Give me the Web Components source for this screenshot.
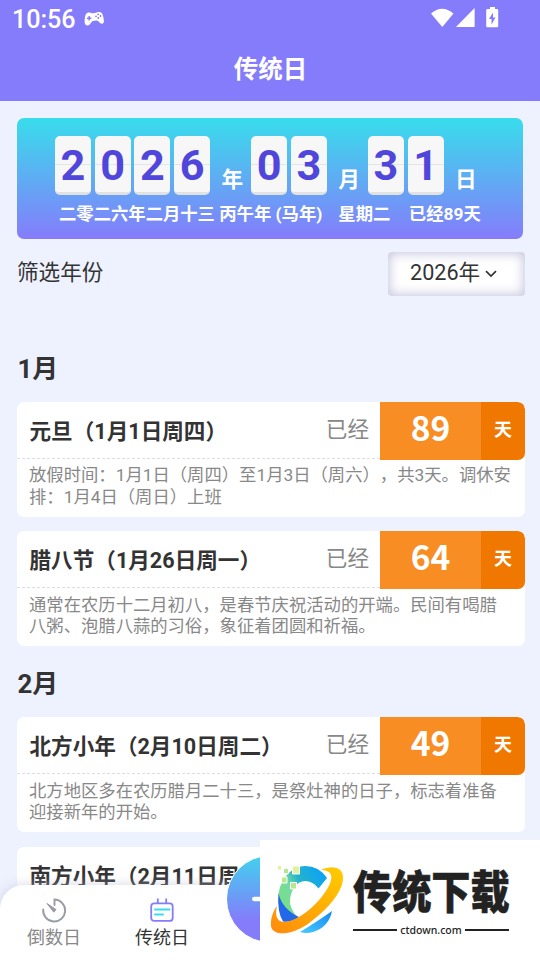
<!DOCTYPE html>
<html lang="zh-CN">
<head>
<meta charset="utf-8">
<title>传统日</title>
<style>
html,body{margin:0;padding:0}
body{width:540px;height:960px;overflow:hidden;background:#eef2ff;color:#333;font-family:Roboto,"Noto Sans CJK SC",sans-serif;text-spacing-trim:space-all}
</style>
</head>
<body>
<app-screen>
  <status-bar slot="top" time="10:56"></status-bar>
  <title-bar slot="top">传统日</title-bar>
  <date-panel year="2026" month="03" day="31">
    <span slot="lunar">二零二六年二月十三 丙午年 (马年)</span>
    <span slot="week">星期二</span>
    <span slot="passed">已经89天</span>
  </date-panel>
  <year-filter label="筛选年份">2026年</year-filter>
  <month-group name="1月">
    <day-card state="已经" days="89" unit="天"><span slot="name">元旦（1月1日周四）</span>放假时间：1月1日（周四）至1月3日（周六），共3天。调休安排：1月4日（周日）上班</day-card>
    <day-card state="已经" days="64" unit="天"><span slot="name">腊八节（1月26日周一）</span>通常在农历十二月初八，是春节庆祝活动的开端。民间有喝腊八粥、泡腊八蒜的习俗，象征着团圆和祈福。</day-card>
  </month-group>
  <month-group name="2月">
    <day-card state="已经" days="49" unit="天"><span slot="name">北方小年（2月10日周二）</span>北方地区多在农历腊月二十三，是祭灶神的日子，标志着准备迎接新年的开始。</day-card>
    <day-card><span slot="name">南方小年（2月11日周</span></day-card>
  </month-group>
  <tab-bar slot="overlay"></tab-bar>
  <site-mark slot="overlay"></site-mark>
</app-screen>
<script>
function define(name, html, setup){
  const t=document.createElement('template'); t.innerHTML=html;
  customElements.define(name, class extends HTMLElement{
    constructor(){super();this.attachShadow({mode:'open'}).append(t.content.cloneNode(true));}
    connectedCallback(){ if(setup) setup(this,this.shadowRoot); }
  });
}

define('app-screen',`<style>
:host{display:block;position:relative;width:540px;height:960px;overflow:hidden}
header{background:#857cfb;height:101px;display:flex;flex-direction:column}
main{padding:17px 15px 0 17px;display:flex;flex-direction:column}
</style><header><slot name="top"></slot></header><main><slot></slot></main><slot name="overlay"></slot>`);

define('status-bar',`<style>
:host{display:flex;height:38px;padding:0 41px 0 12px;align-items:center;color:#fff;box-sizing:border-box;justify-content:space-between}
.l{display:flex;align-items:center}
time{font-size:25.200px;line-height:38px;margin-top:2px;font-weight:500;letter-spacing:-.1px}
.pad{margin:0 0 0 9px}
.sys{margin-top:-3px}
</style>
<div class="l"><time></time>
<svg class="pad" width="21" height="16" viewBox="0 0 21 16"><path fill="#fff" d="M1 6C1.600 2.400 3 1.200 5.500 1.500C7 1.700 8 2.500 9.500 2.300C11.500 2.200 13 .6 15.500 1C18.300 1.400 19 4 19.600 7.500C20.200 10.500 20 12.600 18 12.800C15.800 13 14.600 9.500 12.500 9.600L9 10.100C7 10.300 6.700 14.500 3.500 14.500C.2 14.500 .3 10 1 6Z"/><path stroke="#857cfb" stroke-width="1.500" d="M3 7.200h4.400M5.200 5v4.400"/><g fill="#857cfb"><circle cx="14.200" cy="3.300" r=".9"/><circle cx="16.500" cy="5" r=".9"/><circle cx="12" cy="5.300" r=".9"/><circle cx="14.300" cy="7" r=".9"/></g></svg></div>
<svg class="sys" width="69" height="22" viewBox="0 0 69 22"><g fill="#fff"><path d="M1 6.500Q12 -3 23.500 6.500L12.300 20Z"/><path d="M44.600 1v19H26Z"/><path d="M60 0h5v2h2q1.200 0 1.200 1.200V19q0 1.200-1.200 1.200H57.400q-1.200 0-1.200-1.200V3.200Q56.200 2 57.400 2H60Z"/></g><path fill="#857cfb" d="M63 5.500 59 12h2.500v5.500l4-7H63Z"/></svg>`,
(h,r)=>r.querySelector('time').textContent=h.getAttribute('time'));

define('title-bar',`<style>
:host{display:flex;justify-content:center;height:63px;line-height:63px;color:#fff;font-size:24.480px;font-weight:700;padding-left:1px}
</style><slot></slot>`);

define('flip-digits',`<style>
:host{display:flex;gap:3.700px;margin-right:3.700px}
b{display:block;width:36px;height:59px;box-sizing:border-box;border-radius:5px;border-bottom:3px solid #e2e2e2;background:linear-gradient(#f7f7f7 28px,#e5e5e5 28px,#e5e5e5 29px,#f7f7f7 29px);color:#5046dc;font:700 43.200px/59px Roboto,sans-serif;text-align:center}
</style>`,(h,r)=>{for(const c of h.getAttribute('value')){const b=document.createElement('b');b.textContent=c;r.append(b);}});

define('date-panel',`<style>
:host{display:block;box-sizing:border-box;width:506px;height:121px;padding:18px 30px 0 38px;border-radius:7px;background:linear-gradient(#38ddec,#857cfb);color:#fff;font-weight:700}
.d{display:flex;height:59px}
i{font-style:normal;font-size:21.600px;line-height:30px;align-self:flex-end;margin:0 8px 0 7.800px;height:30px}
.t{display:flex;font-size:17.340px;line-height:24px;margin:7px 0 0 4px;white-space:nowrap}
.w{margin-left:16px}.p{margin-left:18.500px}
</style><div class="d"></div><div class="t"><slot name="lunar"></slot><div class="w"><slot name="week"></slot></div><div class="p"><slot name="passed"></slot></div></div>`,
(h,r)=>{const d=r.querySelector('.d');for(const [k,u] of [['year','年'],['month','月'],['day','日']]){const f=document.createElement('flip-digits');f.setAttribute('value',h.getAttribute(k));const i=document.createElement('i');i.textContent=u;d.append(f,i);}});

define('year-filter',`<style>
:host{display:flex;justify-content:space-between;height:44px;margin-top:13px;font-size:21.600px;line-height:41px}
.s{width:137px;box-sizing:border-box;padding-left:22px;display:flex;gap:5px;align-items:center;background:#fff;border-radius:4px;box-shadow:inset 0 0 11px 2px #c9c9e2}
.s div{margin-top:-3px}
.s svg{margin-top:0}
</style><span class="n"></span><div class="s"><div><slot></slot></div><svg width="12" height="8" viewBox="0 0 12 8"><path d="M1 1.200 6 6 11 1.200" fill="none" stroke="#333" stroke-width="1.700"/></svg></div>`,
(h,r)=>r.querySelector('.n').textContent=h.getAttribute('label'));

define('month-group',`<style>
:host{display:block}
:host(:first-of-type){margin-top:35px}
h2{margin:0;height:71px;font-size:25.920px;line-height:77px;font-weight:700;padding-left:.5px}
.c{display:flex;flex-direction:column;gap:14.400px}
</style><h2></h2><div class="c"><slot></slot></div>`,(h,r)=>r.querySelector('h2').textContent=h.getAttribute('name'));

define('day-card',`<style>
:host{display:block;height:115px;background:#fff;border-radius:7px;overflow:hidden}
.h{display:flex;height:57px;position:relative}
.name{flex:1;box-sizing:border-box;padding-left:12.500px;font-size:21.600px;font-weight:700;line-height:60px;white-space:nowrap}
.line{position:absolute;left:0;width:363px;bottom:0;height:1px;background:repeating-linear-gradient(90deg,#dedede 0 3px,transparent 3px 5px)}
.st{color:#888;font-size:21.600px;line-height:55px;margin-right:11px}
.n{width:101px;height:57.500px;background:#f78d23;color:#fff;text-align:center;font:700 33.600px/50px "Noto Sans CJK SC",sans-serif}
.u{width:44px;height:57.500px;background:#f07800;color:#fff;text-align:center;font-size:18px;font-weight:700;line-height:55px;border-radius:0 7px 7px 0}
p{margin:0;padding:6.200px 12px 0;font-size:17.330px;line-height:21.800px;color:#888}
</style><div class="h"><div class="name"><slot name="name"></slot></div><span class="st"></span><div class="n"></div><div class="u"></div><div class="line"></div></div><p><slot></slot></p>`,
(h,r)=>{for(const [c,a] of [['.st','state'],['.n','days'],['.u','unit']]) r.querySelector(c).textContent=h.getAttribute(a)||'';});

define('tab-bar',`<style>
:host{display:flex;position:absolute;left:0;bottom:0;width:540px;height:75px;background:#fff;border-radius:24px 24px 0 0;box-shadow:0 0 12px #b9bdd299}
.tab{width:108px;display:flex;flex-direction:column;align-items:center;font-size:18px;line-height:26px;color:#888}
.tab svg{margin:12px 0 2px}
.on{color:#333}
.add{position:absolute;left:226px;top:-30px;width:88px;height:88px;box-sizing:border-box;border:1.500px solid #fff;border-radius:50%;background:linear-gradient(#38ddec -10%,#857cfb 75%)}
.add svg{display:block}
</style>
<div class="tab"><svg width="26" height="26" viewBox="0 0 26 26"><path d="M2.200 12.500A11 11 0 1 0 13.500 2.500V8" fill="none" stroke="#999ca6" stroke-width="1.900" stroke-linecap="round"/><path d="M6 6.500 15 12.600 12.800 15.200Z" fill="#999ca6" stroke="#999ca6"/></svg>倒数日</div>
<div class="tab on"><svg width="26" height="26" viewBox="0 0 26 26"><rect x="2.200" y="6.300" width="21.500" height="17.600" rx="3" fill="none" stroke="#857cfb" stroke-width="1.800"/><path d="M8.800 1.500v5M17.200 1.500v5" stroke="#857cfb" stroke-width="1.800"/><path d="M6 12.500h14.500M6 17.500h8" stroke="#38ddec" stroke-width="1.900" stroke-linecap="round"/></svg>传统日</div>
<div class="add"><svg width="85" height="85" viewBox="0 0 84 84"><path d="M27 42.500h31M42.500 27v31" stroke="#fff" stroke-width="4.500" stroke-linecap="round"/></svg></div>`);

define('site-mark',`<style>
:host{display:flex;position:absolute;left:260px;top:840px;width:280px;height:120px;background:#fff;color:#222;box-sizing:border-box;padding-left:8px}
.t{width:156px;margin-left:5px;padding-top:20px}
.b{font:900 39.200px/58px "Noto Sans CJK SC",sans-serif;transform:scaleY(1.160);white-space:nowrap;height:58px;-webkit-text-stroke:.5px #222}
.u{display:flex;align-items:center;gap:3px;font:500 10.500px/16px "Noto Sans",sans-serif;margin-top:4px}
.u:before,.u:after{content:"";flex:1;height:2px;background:#222}
</style>
<svg width="80" height="120" viewBox="268 840 80 120"><defs>
<linearGradient id="a" x1="0" x2="1" y1=".8" y2=".2"><stop stop-color="#7be07a"/><stop offset=".35" stop-color="#74dba4"/><stop offset=".55" stop-color="#25b3cb"/><stop offset="1" stop-color="#0aa2f7"/></linearGradient>
<linearGradient id="o" x1="0" x2="1" y1="1" y2="0"><stop stop-color="#ff8a0c"/><stop offset="1" stop-color="#ffcd00"/></linearGradient>
<linearGradient id="c" x1="0" x2="1" y1="1" y2="0"><stop stop-color="#48cbff"/><stop offset="1" stop-color="#1788ee"/></linearGradient></defs>
<path fill="url(#a)" d="M327 878Q319 866 305 866Q288 867 280 887Q276 900 281 912L298 918Q289 908 290 899Q293 882 305 881Q313 881 318.500 888.500Z"/>
<path fill="#2468ea" d="M278.500 893Q282 909 299 917Q291 923 283 921.500Q277 912 278.500 893Z"/>
<path fill="url(#c)" d="M300 932Q318 921 332 911Q329 927 313 932Q306 934 300 932Z"/>
<path fill="url(#o)" d="M321 870C331 865 344 866 343 879C342 893 327 910 308 924C293 934 276 937 271.500 928C269.500 921 273 911 277 906C275 914 276 921 283 922C292 923 308 913 320 899C329 888 334 878 330 873C328 871 325 870 321 870Z"/>
<g stroke="#fff"><path fill="#bce68c" d="M290.500 882.500h6v6.500h-6z"/><path fill="#b5e986" d="M281.500 877h5.500v6h-5.500zM283.500 868.500h5v5h-5z"/><path fill="#e0f29a" d="M292.500 866h7v8h-7zM277.500 865.500h4v4.500h-4z"/></g></svg>
<div class="t"><div class="b">传统下载</div><div class="u">ctdown.com</div></div>`);
</script>
</body>
</html>
